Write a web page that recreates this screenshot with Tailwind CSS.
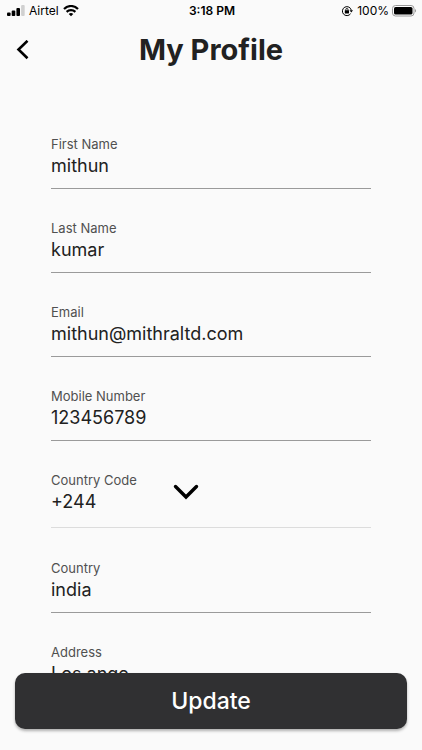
<!DOCTYPE html>
<html lang="en">
<head>
  <meta charset="UTF-8">
  <meta name="viewport" content="width=device-width, initial-scale=1.0">
  <title>My Profile</title>
  <script src="https://cdn.jsdelivr.net/npm/@tailwindcss/browser@4"></script>
</head>
<body class="bg-[#fafafa] font-['Inter',sans-serif] text-[#212121]">
  <div class="flex flex-col h-screen overflow-hidden">

    <!-- Status bar -->
    <div class="grid grid-cols-3 items-center h-[22px] pl-[7px] pr-[5px] text-xs text-black shrink-0">
      <div class="flex items-center gap-1">
        <svg class="w-[18px] h-3" viewBox="0 0 18 12" fill="#000">
          <rect x="0" y="7.500" width="3.600" height="3.500" rx="1" />
          <rect x="4.700" y="5.500" width="3.600" height="5.500" rx="1" />
          <rect x="9.400" y="3" width="3.600" height="8" rx="1" />
          <rect x="14.100" y="0" width="3.600" height="11" rx="1" fill="#d0d0d0" />
        </svg>
        <span>Airtel</span>
        <svg class="w-4 h-3" viewBox="0 0 16 12" fill="none" stroke="#000" stroke-width="2.200">
          <path d="M1 4C5 0 11 0 15 4" />
          <path d="M3.600 6.900c2.500-2.400 6.300-2.400 8.800 0" />
          <path d="M5.700 9c1.300-1.200 3.300-1.200 4.600 0L8 11.300z" fill="#000" stroke="none" />
        </svg>
      </div>
      <div class="text-center font-semibold">3:18 PM</div>
      <div class="flex items-center justify-end gap-1">
        <svg class="w-3 h-3" viewBox="0 0 12 12" fill="none" stroke="#000">
          <path d="M9.600 8.700A4.500 4.500 0 1 1 10.300 5.200" />
          <path d="M8.500 5.200h3.500L10.300 7.600z" fill="#000" stroke="none" />
          <rect x="3.800" y="5.200" width="4.200" height="3.200" rx=".4" fill="#000" stroke="none" />
          <path d="M4.800 5.600V4.600a1.100 1.100 0 0 1 2.200 0v1" stroke-width=".9" />
        </svg>
        <span>100%</span>
        <svg class="w-[25px] h-3 -ml-px" viewBox="0 0 25 12">
          <rect x=".5" y=".5" width="21.500" height="10.500" rx="3" fill="#fff" stroke="#999" />
          <rect x="2" y="2" width="18.500" height="7.500" rx="1.600" fill="#000" />
          <path d="M23 4c1.400.5 1.400 3 0 3.500z" fill="#999" />
        </svg>
      </div>
    </div>

    <!-- Header -->
    <header class="grid grid-cols-[40px_1fr_40px] items-center h-14 px-2 shrink-0">
      <button type="button" aria-label="Back" class="p-2">
        <svg class="w-[14px] h-5" viewBox="0 0 14 20" fill="none" stroke="#000" stroke-width="2.600">
          <path d="M11.500 .8L2.500 9.500l9 8.700" />
        </svg>
      </button>
      <h1 class="text-[29px] font-bold text-center">My Profile</h1>
    </header>

    <!-- Form -->
    <form id="profile" class="flex-1 min-h-0 overflow-hidden px-[51px] pt-[57px]">
      <div class="border-b border-[#9a9a9a] h-[54px] mb-[30px]">
        <label for="firstName" class="block text-[13px] leading-[19px] text-[#505050]">First Name</label>
        <input type="text" id="firstName" value="mithun" class="block w-full h-6 text-lg outline-none" />
      </div>
      <div class="border-b border-[#9a9a9a] h-[54px] mb-[30px]">
        <label for="lastName" class="block text-[13px] leading-[19px] text-[#505050]">Last Name</label>
        <input type="text" id="lastName" value="kumar" class="block w-full h-6 text-lg outline-none" />
      </div>
      <div class="border-b border-[#9a9a9a] h-[54px] mb-[30px]">
        <label for="email" class="block text-[13px] leading-[19px] text-[#505050]">Email</label>
        <input type="email" id="email" value="mithun@mithraltd.com" class="block w-full h-6 text-lg outline-none" />
      </div>
      <div class="border-b border-[#9a9a9a] h-[54px] mb-[30px]">
        <label for="mobile" class="block text-[13px] leading-[19px] text-[#505050]">Mobile Number</label>
        <input type="tel" id="mobile" value="123456789" class="block w-full h-6 text-lg outline-none" />
      </div>
      <div class="flex items-start border-b border-[#dcdcdc] h-[57px] mb-[31px]">
        <div class="w-[122px]">
          <label for="code" class="block text-[13px] leading-[19px] text-[#505050]">Country Code</label>
          <select id="code" class="block w-full h-6 text-lg leading-6 appearance-none outline-none">
            <option selected>+244</option>
            <option>+91</option>
            <option>+1</option>
          </select>
        </div>
        <svg class="w-[26px] h-4 mt-[13px]" viewBox="0 0 26 16" fill="none" stroke="#000" stroke-width="3.400" stroke-linecap="round">
          <path d="M2.500 2.500L13 13 23.500 2.500" />
        </svg>
      </div>
      <div class="border-b border-[#9a9a9a] h-[54px] mb-[30px]">
        <label for="country" class="block text-[13px] leading-[19px] text-[#505050]">Country</label>
        <input type="text" id="country" value="india" class="block w-full h-6 text-lg outline-none" />
      </div>
      <div class="border-b border-[#9a9a9a] h-[54px]">
        <label for="address" class="block text-[13px] leading-[19px] text-[#505050]">Address</label>
        <input type="text" id="address" value="Los ange" class="block w-full h-6 text-lg outline-none" />
      </div>
    </form>

    <div class="px-[15px] pb-[21px] shrink-0">
      <button type="submit" form="profile" class="block w-full h-14 rounded-[10px] bg-[#303032] text-white text-[23px] font-medium shadow-[0_2px_3px_rgba(0,0,0,0.3)]">Update</button>
    </div>
  </div>
</body>
</html>
